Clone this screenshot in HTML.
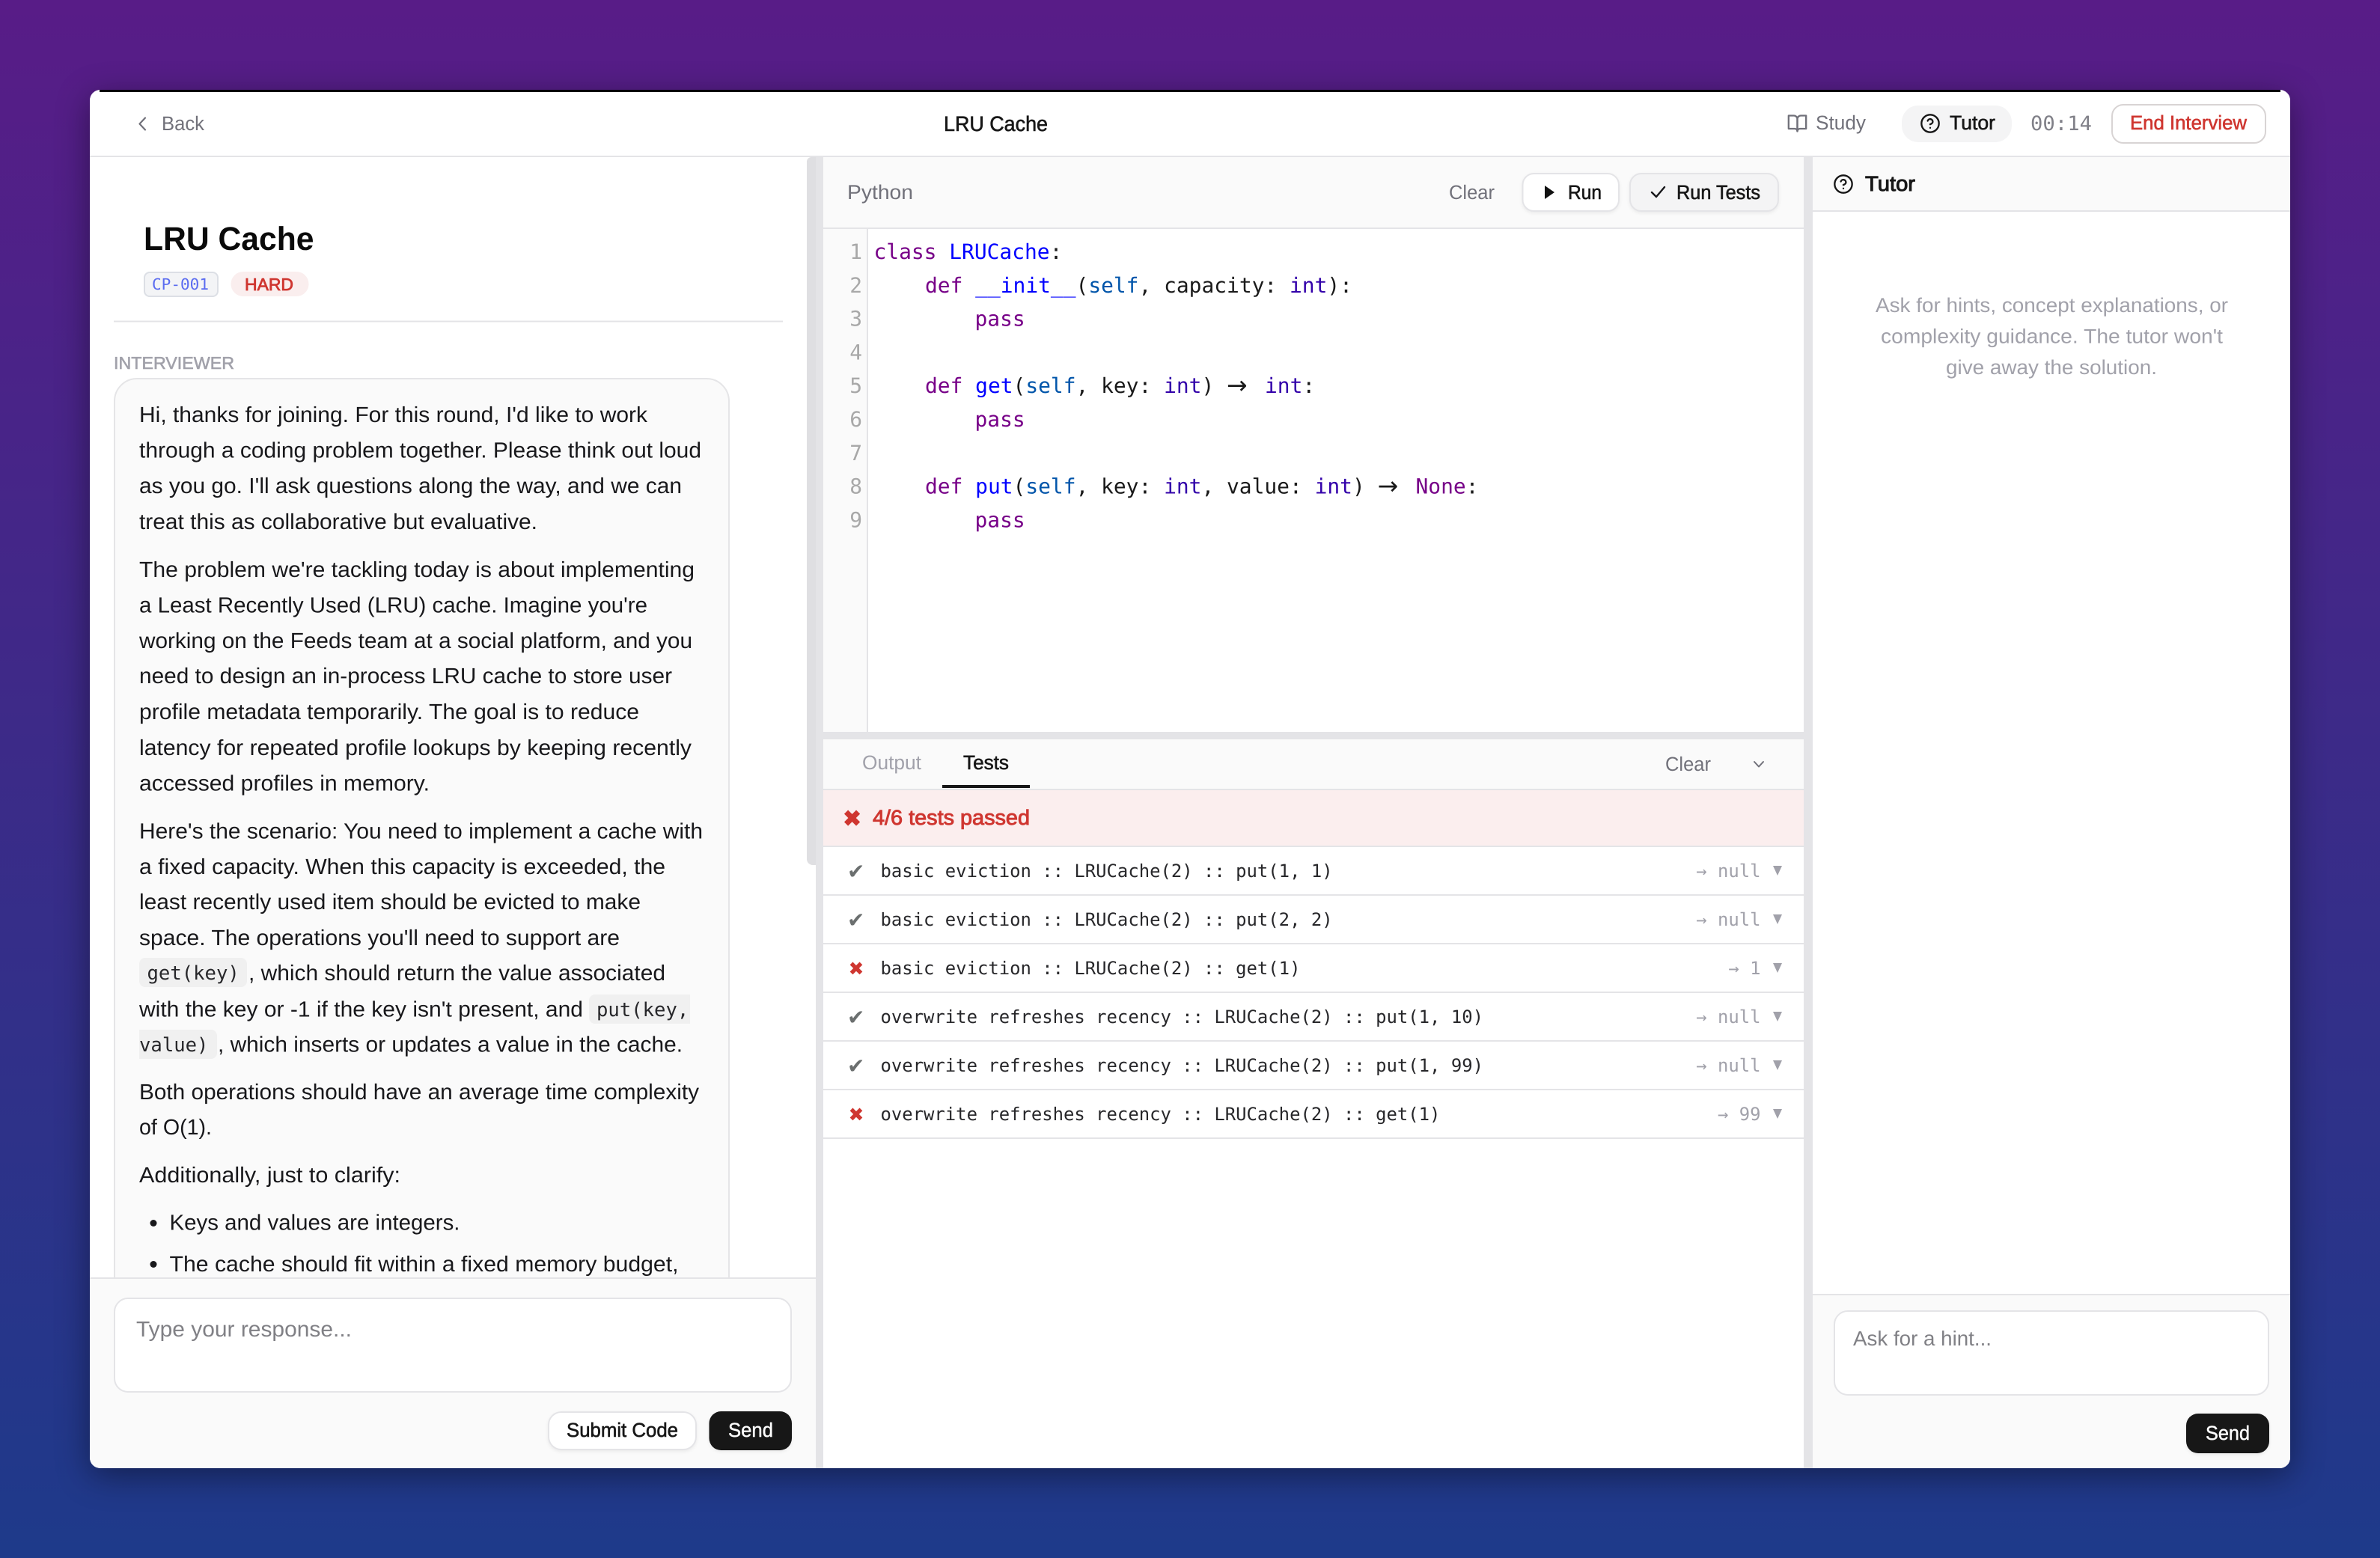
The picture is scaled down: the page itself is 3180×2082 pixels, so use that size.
<!DOCTYPE html>
<html lang="en">
<head>
<meta charset="utf-8">
<title>LRU Cache</title>
<style>
html,body{margin:0;padding:0;width:3180px;height:2082px;overflow:hidden;background:linear-gradient(180deg,#581c87 0%,#1e3a8a 100%)}
.win{position:absolute;left:120px;top:120px;width:2940px;height:1842px;border-radius:14px;background:#fff;box-shadow:0 10px 44px rgba(0,0,0,.42);overflow:hidden}
svg{position:absolute;left:-120px;top:-120px;display:block}
text{font-family:"Liberation Sans",Arial,sans-serif;text-rendering:geometricPrecision;white-space:pre;fill:#171717}
.mono,.mono text{font-family:"DejaVu Sans Mono","Liberation Mono",monospace}
.b{font-size:29.2px;fill:#18181b}
.s{font-size:26.5px}
.g{fill:#71717a}
.l{fill:#a1a1aa}
.r{fill:#cf3630;stroke:#cf3630}
.m{stroke:#171717;stroke-width:.6px}
.r.m{stroke:#cf3630}
.l.m{stroke:#a1a1aa}
.kw{fill:#770088}.df{fill:#0000ff}.v2{fill:#0055aa}.bi{fill:#3300aa}
.cd{font-family:"DejaVu Sans Mono",monospace;font-size:27.9px;fill:#1a1a1a}
.ln{font-family:"DejaVu Sans Mono",monospace;font-size:27.9px;fill:#a8a8a8;text-anchor:end}
.ic{font-family:"DejaVu Sans Mono",monospace;font-size:25.6px;fill:#27272a}
.rw{font-family:"DejaVu Sans Mono",monospace;font-size:23.9px;fill:#27272a}
.rv{font-family:"DejaVu Sans Mono",monospace;font-size:23.9px;fill:#a1a1aa;text-anchor:end}
.ok{font-family:"DejaVu Sans",sans-serif;font-size:28px;fill:#6b6f6f}
.no{font-family:"DejaVu Sans",sans-serif;font-size:25px;fill:#cf3630}
.bd{fill:#e4e4e7}
.btn{filter:drop-shadow(0 2px 2px rgba(0,0,0,.06))}
</style>
</head>
<body>
<div class="win">
<svg width="3180" height="2082" viewBox="0 0 3180 2082" xmlns="http://www.w3.org/2000/svg">
<!-- top edge -->
<rect x="133" y="120" width="2914" height="3" fill="#000"/>
<!-- header -->
<rect x="120" y="208" width="2940" height="2" class="bd"/>
<path d="M194 157.5 186.5 165.5 194 173.5" fill="none" stroke="#71717a" stroke-width="2.2" stroke-linecap="round" stroke-linejoin="round"/>
<text x="216" y="174" class="s g" textLength="57" lengthAdjust="spacingAndGlyphs">Back</text>
<text x="1261" y="175" font-size="28" class="m" textLength="139" lengthAdjust="spacingAndGlyphs">LRU Cache</text>
<g fill="none" stroke="#71717a" stroke-width="2" stroke-linecap="round" stroke-linejoin="round" transform="translate(2387.5 151) scale(1.1667)"><path d="M2 3h6a4 4 0 0 1 4 4v14a3 3 0 0 0-3-3H2z"/><path d="M22 3h-6a4 4 0 0 0-4 4v14a3 3 0 0 1 3-3h7z"/></g>
<text x="2426" y="173" class="s g" textLength="67" lengthAdjust="spacingAndGlyphs">Study</text>
<rect x="2541" y="141" width="147" height="49" rx="22" fill="#f4f4f5"/>
<g fill="none" stroke="#171717" stroke-width="2" stroke-linecap="round" stroke-linejoin="round" transform="translate(2565 151) scale(1.1667)"><circle cx="12" cy="12" r="10"/><path d="M9.09 9a3 3 0 0 1 5.83 1c0 2-3 3-3 3"/><path d="M12 17h.01"/></g>
<text x="2605" y="173" class="s m" textLength="61" lengthAdjust="spacingAndGlyphs">Tutor</text>
<text x="2713" y="174" font-size="26.6" style="fill:#808088;font-family:'DejaVu Sans Mono',monospace" textLength="82" lengthAdjust="spacingAndGlyphs">00:14</text>
<rect x="2822" y="140" width="205" height="51" rx="15" fill="#fff" stroke="#d8d4d4" stroke-width="2"/>
<text x="2846" y="173" class="s r m" textLength="156" lengthAdjust="spacingAndGlyphs">End Interview</text>

<!-- left pane -->
<text x="192" y="334" font-size="44" font-weight="700" textLength="227.5" lengthAdjust="spacingAndGlyphs" style="fill:#0a0a0a">LRU Cache</text>
<rect x="193" y="364" width="98" height="32" rx="7" fill="#f3f4f6" stroke="#dcdfe5" stroke-width="2"/>
<text x="203" y="387" font-size="20.8" style="fill:#5b6cf0;font-family:'DejaVu Sans Mono',monospace" textLength="76" lengthAdjust="spacingAndGlyphs">CP-001</text>
<rect x="308.500" y="363" width="104" height="33" rx="16.500" fill="#faeeee"/>
<text x="327" y="388" font-size="23" class="r m" style="stroke-width:.8px" textLength="65" lengthAdjust="spacingAndGlyphs">HARD</text>
<rect x="152" y="428.500" width="894" height="2" class="bd"/>
<text x="152" y="493" font-size="23" class="l m" textLength="161" lengthAdjust="spacingAndGlyphs">INTERVIEWER</text>
<rect x="153" y="506" width="821" height="1300" rx="30" fill="#fafafa" stroke="#e5e5e7" stroke-width="2"/>

<text x="186" y="564" class="b" textLength="679" lengthAdjust="spacingAndGlyphs">Hi, thanks for joining. For this round, I'd like to work</text>
<text x="186" y="611.600" class="b" textLength="751" lengthAdjust="spacingAndGlyphs">through a coding problem together. Please think out loud</text>
<text x="186" y="659.200" class="b" textLength="725" lengthAdjust="spacingAndGlyphs">as you go. I'll ask questions along the way, and we can</text>
<text x="186" y="706.800" class="b" textLength="532" lengthAdjust="spacingAndGlyphs">treat this as collaborative but evaluative.</text>

<text x="186" y="771" class="b" textLength="742" lengthAdjust="spacingAndGlyphs">The problem we're tackling today is about implementing</text>
<text x="186" y="818.600" class="b" textLength="679" lengthAdjust="spacingAndGlyphs">a Least Recently Used (LRU) cache. Imagine you're</text>
<text x="186" y="866" class="b" textLength="739" lengthAdjust="spacingAndGlyphs">working on the Feeds team at a social platform, and you</text>
<text x="186" y="913" class="b" textLength="712" lengthAdjust="spacingAndGlyphs">need to design an in-process LRU cache to store user</text>
<text x="186" y="961" class="b" textLength="668" lengthAdjust="spacingAndGlyphs">profile metadata temporarily. The goal is to reduce</text>
<text x="186" y="1009" class="b" textLength="738" lengthAdjust="spacingAndGlyphs">latency for repeated profile lookups by keeping recently</text>
<text x="186" y="1056.600" class="b" textLength="388" lengthAdjust="spacingAndGlyphs">accessed profiles in memory.</text>

<text x="186" y="1120.600" class="b" textLength="753" lengthAdjust="spacingAndGlyphs">Here's the scenario: You need to implement a cache with</text>
<text x="186" y="1168" class="b" textLength="703" lengthAdjust="spacingAndGlyphs">a fixed capacity. When this capacity is exceeded, the</text>
<text x="186" y="1215" class="b" textLength="670" lengthAdjust="spacingAndGlyphs">least recently used item should be evicted to make</text>
<text x="186" y="1263" class="b" textLength="642" lengthAdjust="spacingAndGlyphs">space. The operations you'll need to support are</text>

<rect x="186" y="1280" width="144" height="39" rx="8" fill="#f0f0f0"/>
<text x="196.500" y="1309" class="ic">get(key)</text>
<text x="332" y="1310" class="b" textLength="557" lengthAdjust="spacingAndGlyphs">, which should return the value associated</text>
<text x="186" y="1358.400" class="b" textLength="593" lengthAdjust="spacingAndGlyphs">with the key or -1 if the key isn't present, and</text>
<path d="M795 1329H922V1368H795a8 8 0 0 1-8-8V1337a8 8 0 0 1 8-8z" fill="#f0f0f0"/>
<text x="797" y="1358" class="ic">put(key,</text>
<path d="M186 1376H282a8 8 0 0 1 8 8V1407a8 8 0 0 1-8 8H186z" fill="#f0f0f0"/>
<text x="186" y="1405" class="ic">value)</text>
<text x="291" y="1405.500" class="b" textLength="621" lengthAdjust="spacingAndGlyphs">, which inserts or updates a value in the cache.</text>

<text x="186" y="1469" class="b" textLength="748" lengthAdjust="spacingAndGlyphs">Both operations should have an average time complexity</text>
<text x="186" y="1516" class="b" textLength="97" lengthAdjust="spacingAndGlyphs">of O(1).</text>
<text x="186" y="1580" class="b" textLength="349" lengthAdjust="spacingAndGlyphs">Additionally, just to clarify:</text>
<circle cx="205" cy="1634.500" r="4.500" fill="#18181b"/>
<text x="226.500" y="1643.500" class="b" textLength="388" lengthAdjust="spacingAndGlyphs">Keys and values are integers.</text>
<circle cx="205" cy="1689.500" r="4.500" fill="#18181b"/>
<text x="226.500" y="1699" class="b" textLength="680" lengthAdjust="spacingAndGlyphs">The cache should fit within a fixed memory budget,</text>

<!-- left input panel -->
<rect x="120" y="1707" width="970" height="255" fill="#fafafa"/>
<rect x="120" y="1707" width="970" height="2" class="bd"/>
<rect x="153" y="1735" width="904" height="125" rx="18" fill="#fff" stroke="#e4e4e7" stroke-width="2"/>
<text x="182" y="1786" font-size="29" style="fill:#808085" textLength="288" lengthAdjust="spacingAndGlyphs">Type your response...</text>
<rect class="btn" x="733" y="1887" width="197" height="50" rx="17" fill="#fff" stroke="#e4e4e7" stroke-width="2"/>
<text x="757" y="1920" class="s m" textLength="149" lengthAdjust="spacingAndGlyphs">Submit Code</text>
<rect class="btn" x="947.500" y="1886" width="110.500" height="52" rx="16" fill="#171717"/>
<text x="973" y="1920" class="s" style="fill:#fff;stroke:#fff;stroke-width:.45px" textLength="60" lengthAdjust="spacingAndGlyphs">Send</text>

<!-- splitter & scrollbar -->
<rect x="1090" y="210" width="10" height="1752" class="bd"/>
<path d="M1078 216a6 6 0 0 1 6-6h6V1156h-4a8 8 0 0 1-8-8z" fill="#dfdfe2"/>

<!-- editor toolbar -->
<rect x="1100" y="210" width="1310" height="94" fill="#fafafa"/>
<rect x="1100" y="304" width="1310" height="2" class="bd"/>
<text x="1132" y="266" font-size="27" class="g" textLength="88" lengthAdjust="spacingAndGlyphs">Python</text>
<text x="1936" y="266" class="s g" textLength="61" lengthAdjust="spacingAndGlyphs">Clear</text>
<rect class="btn" x="2034.500" y="232" width="128.500" height="50" rx="15" fill="#fff" stroke="#e4e4e7" stroke-width="2"/>
<polygon points="2064,248 2077,257 2064,266" fill="#111"/>
<text x="2095" y="266" class="s m" textLength="45" lengthAdjust="spacingAndGlyphs">Run</text>
<rect class="btn" x="2178" y="232" width="198" height="50" rx="15" fill="#f4f4f5" stroke="#e4e4e7" stroke-width="2"/>
<path d="M2207 257 2213 263 2224 250" fill="none" stroke="#18181b" stroke-width="2.400" stroke-linecap="round" stroke-linejoin="round"/>
<text x="2240" y="266" class="s m" textLength="112" lengthAdjust="spacingAndGlyphs">Run Tests</text>

<!-- code editor -->
<rect x="1100" y="306" width="58" height="672" fill="#fafafa"/>
<rect x="1158" y="306" width="2" height="672" class="bd"/>
<text x="1152" y="346" class="ln">1</text>
<text x="1152" y="390.800" class="ln">2</text>
<text x="1152" y="435.600" class="ln">3</text>
<text x="1152" y="480.400" class="ln">4</text>
<text x="1152" y="525.200" class="ln">5</text>
<text x="1152" y="570" class="ln">6</text>
<text x="1152" y="614.800" class="ln">7</text>
<text x="1152" y="659.600" class="ln">8</text>
<text x="1152" y="704.400" class="ln">9</text>

<text x="1167.500" y="346" class="cd"><tspan class="kw">class</tspan> <tspan class="df">LRUCache</tspan>:</text>
<text x="1236" y="390.800" class="cd"><tspan class="kw">def</tspan> <tspan class="df">__init__</tspan>(<tspan class="v2">self</tspan>, capacity: <tspan class="bi">int</tspan>):</text>
<text x="1302.500" y="435.600" class="cd"><tspan class="kw">pass</tspan></text>
<text x="1236" y="525.200" class="cd"><tspan class="kw">def</tspan> <tspan class="df">get</tspan>(<tspan class="v2">self</tspan>, key: <tspan class="bi">int</tspan>)</text>
<text x="1639" y="526" font-size="33" style="font-family:'DejaVu Sans',sans-serif;fill:#1a1a1a">→</text>
<text x="1690" y="525.200" class="cd"><tspan class="bi">int</tspan>:</text>
<text x="1302.500" y="570" class="cd"><tspan class="kw">pass</tspan></text>
<text x="1236" y="659.600" class="cd"><tspan class="kw">def</tspan> <tspan class="df">put</tspan>(<tspan class="v2">self</tspan>, key: <tspan class="bi">int</tspan>, value: <tspan class="bi">int</tspan>)</text>
<text x="1840.600" y="660.400" font-size="33" style="font-family:'DejaVu Sans',sans-serif;fill:#1a1a1a">→</text>
<text x="1891.500" y="659.600" class="cd"><tspan class="kw">None</tspan>:</text>
<text x="1302.500" y="704.400" class="cd"><tspan class="kw">pass</tspan></text>

<!-- horizontal splitter -->
<rect x="1100" y="978" width="1310" height="10" class="bd"/>

<!-- tabs -->
<rect x="1100" y="988" width="1310" height="66" fill="#fafafa"/>
<rect x="1100" y="1054" width="1310" height="2" class="bd"/>
<text x="1152" y="1028" class="s l" textLength="79" lengthAdjust="spacingAndGlyphs">Output</text>
<text x="1287" y="1028" class="s m" textLength="61" lengthAdjust="spacingAndGlyphs">Tests</text>
<rect x="1259" y="1049" width="117" height="4" fill="#171717"/>
<text x="2225" y="1030" class="s g" textLength="61" lengthAdjust="spacingAndGlyphs">Clear</text>
<path d="M2344 1018 2350 1024.500 2356 1018" fill="none" stroke="#71717a" stroke-width="2" stroke-linecap="round" stroke-linejoin="round"/>

<!-- banner -->
<rect x="1100" y="1056" width="1310" height="74" fill="#fbeeee"/>
<rect x="1100" y="1130" width="1310" height="2" class="bd"/>
<text x="1126" y="1104" style="font-family:'DejaVu Sans',sans-serif;font-size:30px;fill:#cf3630;stroke:#cf3630;stroke-width:.8px">✖</text>
<text x="1166" y="1102" font-size="28" class="r m" style="stroke-width:.9px" textLength="210" lengthAdjust="spacingAndGlyphs">4/6 tests passed</text>

<!-- test rows -->
<rect x="1100" y="1195" width="1310" height="2" class="bd"/>
<rect x="1100" y="1260" width="1310" height="2" class="bd"/>
<rect x="1100" y="1325" width="1310" height="2" class="bd"/>
<rect x="1100" y="1390" width="1310" height="2" class="bd"/>
<rect x="1100" y="1455" width="1310" height="2" class="bd"/>
<rect x="1100" y="1520" width="1310" height="2" class="bd"/>

<text x="1132" y="1174" class="ok">✔</text>
<text x="1132" y="1239" class="ok">✔</text>
<text x="1133.500" y="1303" class="no">✖</text>
<text x="1132" y="1369" class="ok">✔</text>
<text x="1132" y="1434" class="ok">✔</text>
<text x="1133.500" y="1498" class="no">✖</text>

<text x="1176.500" y="1172" class="rw">basic eviction :: LRUCache(2) :: put(1, 1)</text>
<text x="1176.500" y="1237" class="rw">basic eviction :: LRUCache(2) :: put(2, 2)</text>
<text x="1176.500" y="1302" class="rw">basic eviction :: LRUCache(2) :: get(1)</text>
<text x="1176.500" y="1367" class="rw">overwrite refreshes recency :: LRUCache(2) :: put(1, 10)</text>
<text x="1176.500" y="1432" class="rw">overwrite refreshes recency :: LRUCache(2) :: put(1, 99)</text>
<text x="1176.500" y="1497" class="rw">overwrite refreshes recency :: LRUCache(2) :: get(1)</text>

<text x="2352.500" y="1172" class="rv">→ null</text>
<text x="2352.500" y="1237" class="rv">→ null</text>
<text x="2352.500" y="1302" class="rv">→ 1</text>
<text x="2352.500" y="1367" class="rv">→ null</text>
<text x="2352.500" y="1432" class="rv">→ null</text>
<text x="2352.500" y="1497" class="rv">→ 99</text>

<g fill="#a1a1aa">
<polygon points="2369,1157 2381,1157 2375,1170"/>
<polygon points="2369,1222 2381,1222 2375,1235"/>
<polygon points="2369,1287 2381,1287 2375,1300"/>
<polygon points="2369,1352 2381,1352 2375,1365"/>
<polygon points="2369,1417 2381,1417 2375,1430"/>
<polygon points="2369,1482 2381,1482 2375,1495"/>
</g>

<!-- right splitter -->
<rect x="2410" y="210" width="12" height="1752" class="bd"/>

<!-- tutor pane -->
<rect x="2422" y="210" width="638" height="71" fill="#fafafa"/>
<rect x="2422" y="281" width="638" height="2" class="bd"/>
<g fill="none" stroke="#171717" stroke-width="2" stroke-linecap="round" stroke-linejoin="round" transform="translate(2449 232) scale(1.1667)"><circle cx="12" cy="12" r="10"/><path d="M9.09 9a3 3 0 0 1 5.83 1c0 2-3 3-3 3"/><path d="M12 17h.01"/></g>
<text x="2492" y="255" font-size="28" class="m" style="stroke-width:1px" textLength="67" lengthAdjust="spacingAndGlyphs">Tutor</text>
<text x="2506" y="417" font-size="27" class="l" textLength="471" lengthAdjust="spacingAndGlyphs">Ask for hints, concept explanations, or</text>
<text x="2513" y="458.600" font-size="27" class="l" textLength="457" lengthAdjust="spacingAndGlyphs">complexity guidance. The tutor won't</text>
<text x="2600" y="500.200" font-size="27" class="l" textLength="282" lengthAdjust="spacingAndGlyphs">give away the solution.</text>

<rect x="2422" y="1729" width="638" height="233" fill="#fafafa"/>
<rect x="2422" y="1729" width="638" height="2" class="bd"/>
<rect x="2451" y="1752" width="580" height="112" rx="18" fill="#fff" stroke="#e4e4e7" stroke-width="2"/>
<text x="2476" y="1798" font-size="27.5" style="fill:#808085" textLength="185" lengthAdjust="spacingAndGlyphs">Ask for a hint...</text>
<rect class="btn" x="2921" y="1889" width="111" height="53" rx="16" fill="#171717"/>
<text x="2947" y="1924" class="s" style="fill:#fff;stroke:#fff;stroke-width:.45px" textLength="59" lengthAdjust="spacingAndGlyphs">Send</text>
</svg>
</div>
</body>
</html>
